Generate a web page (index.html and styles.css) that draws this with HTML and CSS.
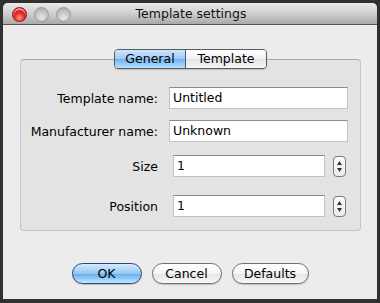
FILE: index.html
```html
<!DOCTYPE html>
<html>
<head>
<meta charset="utf-8">
<link rel="stylesheet" href="styles.css">
</head>
<body>
<div class="window">
  <div class="titlebar">
    <div class="lights">
      <span class="light red"></span>
      <span class="light grey"></span>
      <span class="light grey"></span>
    </div>
    <div class="title">Template settings</div>
  </div>
  <div class="content">
    <div class="tabs">
      <span class="seg sel">General</span><span class="seg">Template</span>
    </div>
    <div class="group">
      <div class="row r1">
        <span class="label">Template name:</span>
        <span class="field wide">Untitled</span>
      </div>
      <div class="row r2">
        <span class="label">Manufacturer name:</span>
        <span class="field wide">Unknown</span>
      </div>
      <div class="row r3">
        <span class="label">Size</span>
        <span class="field num">1</span>
        <span class="stepper"><svg width="13" height="21" viewBox="0 0 13 21"><path d="M6.5 5 L9 9 L4 9 Z" fill="#333"/><path d="M6.5 16 L9 12 L4 12 Z" fill="#333"/></svg></span>
      </div>
      <div class="row r4">
        <span class="label">Position</span>
        <span class="field num">1</span>
        <span class="stepper"><svg width="13" height="21" viewBox="0 0 13 21"><path d="M6.5 5 L9 9 L4 9 Z" fill="#333"/><path d="M6.5 16 L9 12 L4 12 Z" fill="#333"/></svg></span>
      </div>
    </div>
    <div class="buttons">
      <span class="btn ok">OK</span>
      <span class="btn cancel">Cancel</span>
      <span class="btn defaults">Defaults</span>
    </div>
  </div>
</div>
</body>
</html>
```
FILE: styles.css
```css
html, body {
  margin: 0;
  padding: 0;
  background: #303030;
  width: 380px;
  height: 303px;
  overflow: hidden;
  font-family: "DejaVu Sans", "Liberation Sans", sans-serif;
  color: #000;
}
.window {
  margin: 3px 0 0 3px;
  width: 374px;
  height: 296px;
  background: #ececec;
  border-radius: 5px 5px 0 0;
  display: flex;
  flex-direction: column;
  overflow: hidden;
}
.titlebar {
  height: 21px;
  border-bottom: 1px solid #565656;
  background: linear-gradient(#e9e9e9, #cfcfcf 50%, #a9a9a9);
  display: flex;
  align-items: center;
}
.lights {
  display: flex;
  gap: 7px;
  padding-left: 9px;
  padding-top: 1px;
}
.light {
  width: 13px;
  height: 13px;
  border-radius: 50%;
  display: block;
}
.light.red {
  background: radial-gradient(circle at 50% 75%, #ff9a8a 0%, #f0282a 40%, #b00000 90%);
  border: 1px solid #8a1010;
  box-shadow: inset 0 2px 1px rgba(255,255,255,0.6);
}
.light.grey {
  background: radial-gradient(circle at 50% 75%, #e8e8e8 0%, #c6c6c6 50%, #a6a6a6 95%);
  border: 1px solid #9a9a9a;
}
.title {
  flex: 1;
  text-align: center;
  font-size: 12.5px;
  padding-right: 66px;
  color: #111;
}
.content {
  padding: 24px 16px 0 17px;
  display: flex;
  flex-direction: column;
}
.tabs {
  align-self: center;
  display: flex;
  position: relative;
  z-index: 1;
  border: 1px solid #5a5a5a;
  border-radius: 4px;
  overflow: hidden;
  height: 18px;
  box-shadow: 0 1px 1px rgba(0,0,0,0.15);
}
.seg {
  font-size: 12.5px;
  line-height: 18px;
  text-align: center;
  background: linear-gradient(#ffffff, #f2f2f2 50%, #e3e3e3 51%, #f6f6f6);
}
.seg:first-child {
  width: 70px;
  border-right: 1px solid #8a8a8a;
}
.seg:last-child {
  width: 80px;
}
.seg.sel {
  background: linear-gradient(#cfe6fb, #9ccaf3 50%, #6eb1ee 51%, #b9e2ff);
  border-right: 1px solid #3a5b9a;
}
.group {
  margin-top: -10px;
  height: 172px;
  background: #e3e3e3;
  border: 1px solid #c6c6c6;
  border-top-color: #a8a8a8;
  border-radius: 4px;
  box-sizing: border-box;
  padding-top: 27px;
  display: flex;
  flex-direction: column;
}
.row {
  display: flex;
  align-items: center;
}
.r2 { margin-top: 11px; }
.r3 { margin-top: 13px; }
.r4 { margin-top: 18px; }
.label {
  width: 137px;
  text-align: right;
  font-size: 12.5px;
}
.field {
  box-sizing: border-box;
  background: #fff;
  border: 1px solid #c2c2c2;
  border-top-color: #8c8c8c;
  font-size: 12.5px;
  padding-left: 3px;
  line-height: 19px;
}
.field.wide {
  margin-left: 11px;
  width: 179px;
  height: 22px;
}
.field.num {
  margin-left: 15px;
  width: 152px;
  height: 22px;
}
.stepper {
  margin-left: 8px;
  width: 13px;
  height: 21px;
  box-sizing: border-box;
  border: 1px solid #7a7a7a;
  border-radius: 4px;
  background: linear-gradient(#fdfdfd, #e9e9e9);
  display: flex;
  overflow: hidden;
}
.stepper svg {
  margin: -1px;
  display: block;
}
.buttons {
  margin-top: 32px;
  display: flex;
  justify-content: center;
  gap: 10px;
  padding-right: 1px;
}
.btn {
  box-sizing: border-box;
  height: 21px;
  border-radius: 11px;
  border: 1px solid #707070;
  background: linear-gradient(#ffffff, #f4f4f4 50%, #e4e4e4 51%, #f8f8f8);
  font-size: 12.5px;
  line-height: 19px;
  text-align: center;
  box-shadow: 0 1px 1px rgba(0,0,0,0.2);
}
.btn.ok {
  width: 70px;
  border-color: #3b3f80;
  background: linear-gradient(#d4ebfd, #94c8f3 50%, #63aeec 51%, #bfe8ff);
}
.btn.cancel { width: 70px; }
.btn.defaults { width: 77px; }
```
